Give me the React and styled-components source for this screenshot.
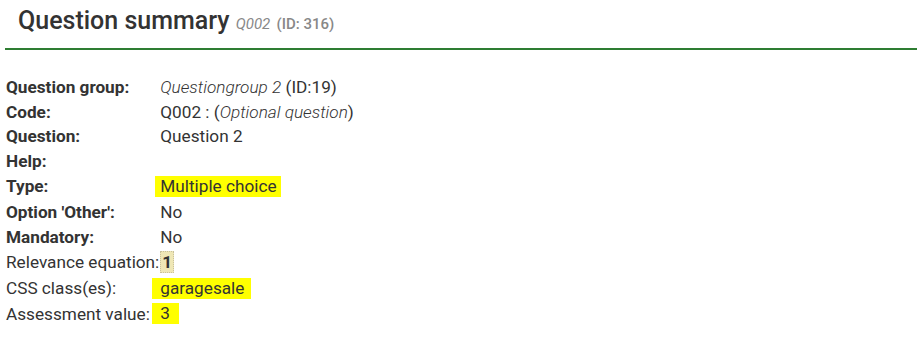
import React from "react";
import styled, { createGlobalStyle } from "styled-components";

const Global = createGlobalStyle`
  html, body { margin: 0; padding: 0; background: #fff; }
  body { font-family: Roboto, "Noto Sans", Arial, sans-serif; color: #333; }
`;

const Page = styled.div`
  padding: 0 7px 0 5px;
`;

const Header = styled.div`
  border-bottom: 2px solid #2e7d32;
  padding: 5px 0 8px 13px;
`;

const Title = styled.h3`
  margin: 0;
  font-size: 25px;
  line-height: 32px;
  font-weight: 500;
  color: #333;
`;

const Small = styled.small`
  font-size: 15px;
  font-weight: ${(p) => (p.$italic ? 400 : 500)};
  font-style: ${(p) => (p.$italic ? "italic" : "normal")};
  color: #888;
`;

const Table = styled.table`
  margin: 25px 0 0 1px;
  border-collapse: collapse;
  font-size: 17.2px;
  color: #333;
`;

const Row = styled.tr`
  height: ${(p) => p.$h || 24.5}px;
`;

const Label = styled.td`
  padding: 0;
  font-weight: ${(p) => (p.$plain ? 400 : 700)};
  white-space: nowrap;
  vertical-align: middle;
`;

const Value = styled.td`
  padding: 0 0 0 1px;
  vertical-align: middle;
  white-space: nowrap;
`;

const Em = styled.em`
  font-style: italic;
  font-weight: 300;
`;

const Mark = styled.span`
  display: inline-block;
  background: #ffff00;
  line-height: 21px;
  margin-left: ${(p) => p.$ml}px;
  padding: 0 ${(p) => p.$pr}px 0 ${(p) => p.$pl}px;
`;

const Eq = styled.span`
  display: inline-block;
  background: #efe7b6;
  border: 1px dotted #c9c19c;
  font-weight: 700;
  line-height: 20px;
  padding: 0 1px;
`;

export default function App() {
  return (
    <Page>
      <Global />
      <Header>
        <Title>
          Question summary <Small $italic>Q002</Small> <Small>(ID: 316)</Small>
        </Title>
      </Header>
      <Table>
        <tbody>
          <Row>
            <Label>Question group:</Label>
            <Value>
              <Em>Questiongroup 2</Em> (ID:19)
            </Value>
          </Row>
          <Row>
            <Label>Code:</Label>
            <Value>
              Q002 : (<Em>Optional question</Em>)
            </Value>
          </Row>
          <Row>
            <Label>Question:</Label>
            <Value>Question 2</Value>
          </Row>
          <Row>
            <Label>Help:</Label>
            <Value></Value>
          </Row>
          <Row $h={26}>
            <Label>Type:</Label>
            <Value>
              <Mark $ml={-5} $pl={5} $pr={4}>Multiple choice</Mark>
            </Value>
          </Row>
          <Row $h={25}>
            <Label>Option 'Other':</Label>
            <Value>No</Value>
          </Row>
          <Row $h={25}>
            <Label>Mandatory:</Label>
            <Value>No</Value>
          </Row>
          <Row $h={25}>
            <Label $plain>Relevance equation:</Label>
            <Value>
              <Eq>1</Eq>
            </Value>
          </Row>
          <Row $h={28}>
            <Label $plain>CSS class(es):</Label>
            <Value>
              <Mark $ml={-8} $pl={8} $pr={7}>garagesale</Mark>
            </Value>
          </Row>
          <Row $h={23}>
            <Label $plain>Assessment value:</Label>
            <Value>
              <Mark $ml={-8} $pl={8} $pr={9}>3</Mark>
            </Value>
          </Row>
        </tbody>
      </Table>
    </Page>
  );
}
